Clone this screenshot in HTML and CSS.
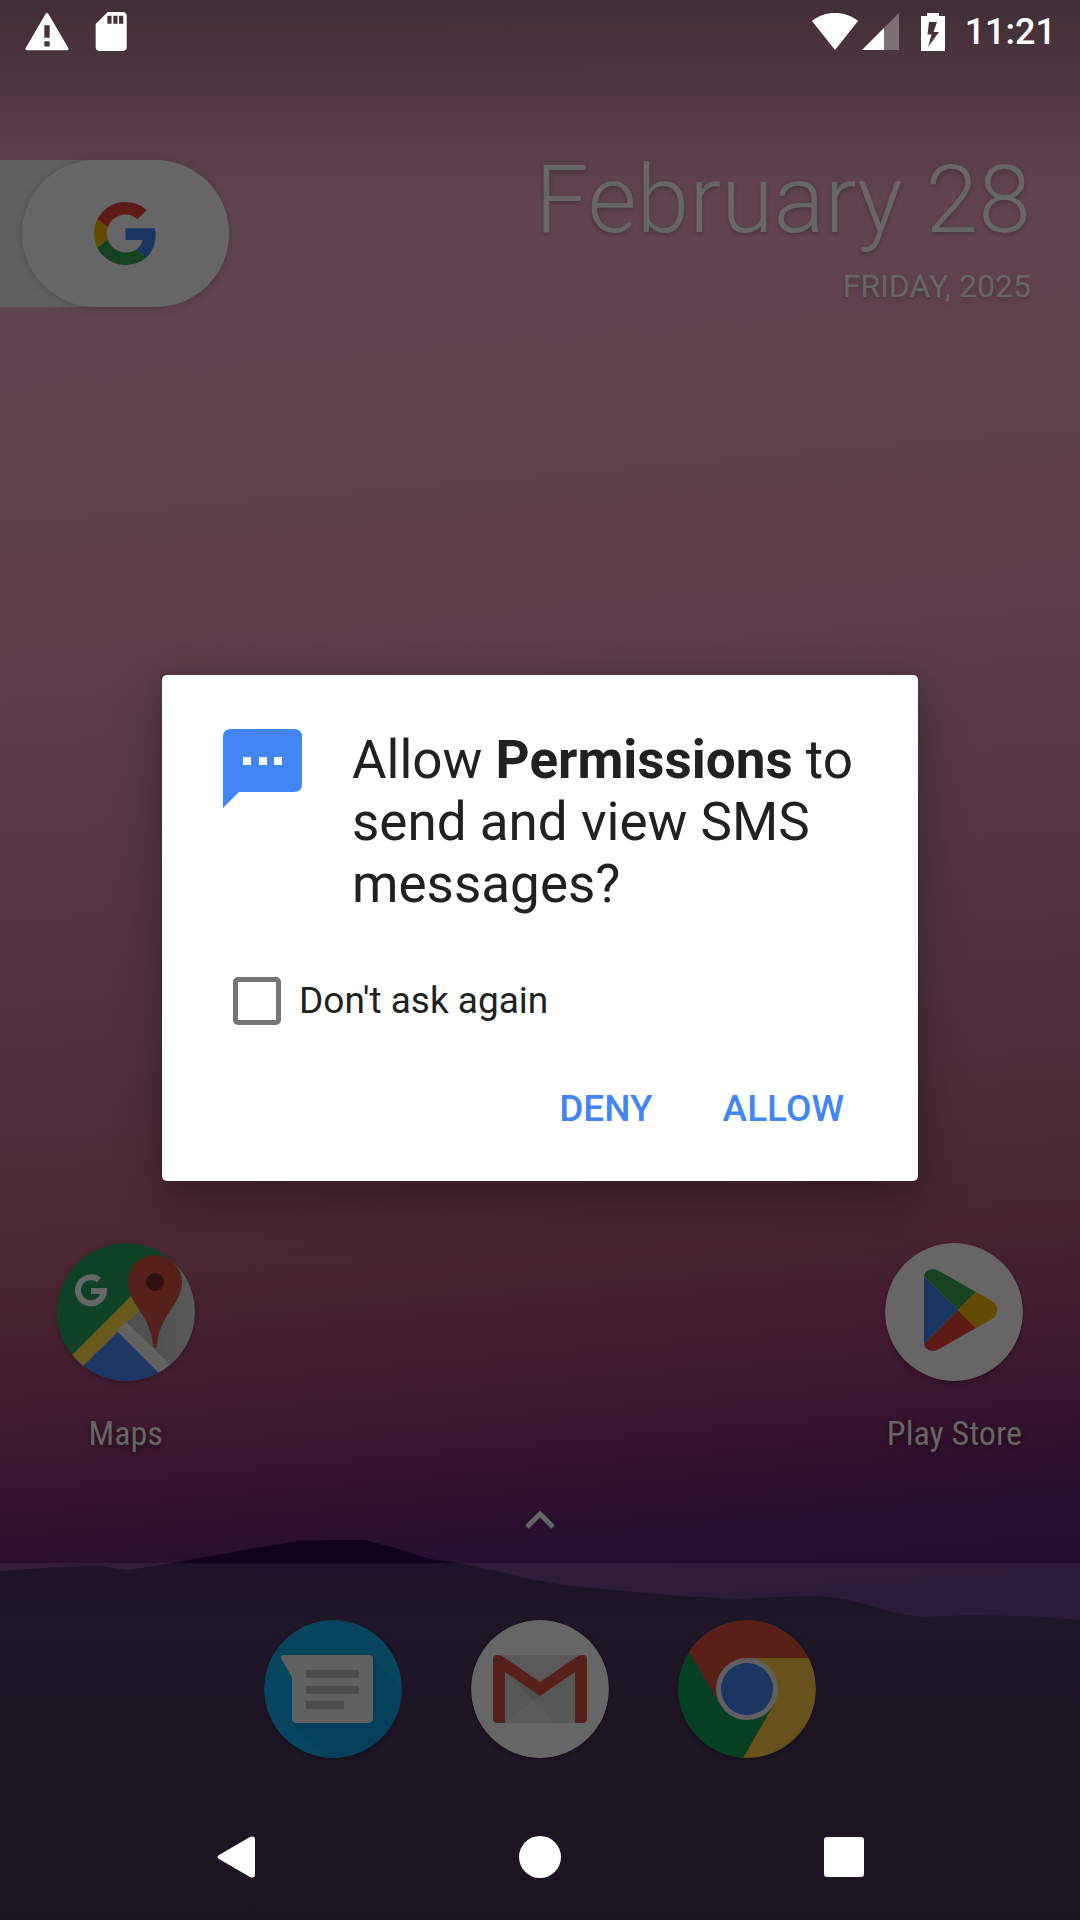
FILE: index.html
```html
<!DOCTYPE html>
<html lang="en">
<head>
<meta charset="utf-8">
<meta name="viewport" content="width=device-width, initial-scale=1">
<title>Permission request</title>
<link rel="stylesheet" href="styles.css">
</head>
<body>
<div class="screen">
  <svg class="hills" viewBox="0 0 1080 390" preserveAspectRatio="none" aria-hidden="true">
    <defs>
      <linearGradient id="hill" x1="0" y1="0" x2="0" y2="1">
        <stop offset="0" stop-color="#12001d"/>
        <stop offset="0.2" stop-color="#12081b"/>
        <stop offset="1" stop-color="#0e0614"/>
      </linearGradient>
    </defs>
    <path fill="url(#hill)" d="M0 41L60 37L100 36L128 40L165 34L200 28L250 19L300 11L335 10H365L395 18L430 29L465 34L505 43L535 50L570 56L625 61L680 66L740 69L780 67L820 66L850 70L900 84L925 87L970 85L1030 86L1080 90V390H0Z"/>
  </svg>

  <header class="status">
    <div class="status-group notices">
      <svg class="status-icon" viewBox="0 0 24 24" role="img" aria-label="Warning"><path fill="#fff" d="M1.6 21.5h20.8c.7 0 1-.6.7-1.200L12.700 2.500c-.3-.6-1.100-.6-1.400 0L.9 20.300c-.3.6 0 1.200.7 1.200zM10.600 8.500h2.800v6.500h-2.800zm0 8.300h2.800v2.700h-2.800z" fill-rule="evenodd"/></svg>
      <svg class="status-icon" viewBox="0 0 24 24" role="img" aria-label="SD card"><path fill="#fff" fill-rule="evenodd" d="M18.300 1.500h-8L4 7.800v12.200c0 1.100.8 1.900 1.800 1.900h12.500c1.100 0 1.900-.8 1.900-1.900v-16.500c0-1.100-.8-2-1.900-2zM10.100 3.500h2.200v4.200h-2.200zm3.100 0h2.200v4.200h-2.200zm3 0h2.200v4.200h-2.200z"/></svg>
    </div>
    <div class="status-group">
      <svg class="wifi" viewBox="0 0 46 37" role="img" aria-label="Wi-Fi"><path fill="#fff" d="M0 8C13-2.600 33-2.600 46 8L23 37z"/></svg>
      <svg class="signal" viewBox="0 0 37 37" role="img" aria-label="Signal"><path fill="#fff" fill-opacity=".3" d="M37 0v37H0z"/><path fill="#fff" d="M22 15v22H0z"/></svg>
      <svg class="battery" viewBox="0 0 24 38" role="img" aria-label="Battery charging"><path fill="#fff" fill-rule="evenodd" d="M6 0h12v3h6v35H0V3h6zM8 9L6.500 21.500h4L7 34l11-15h-5.500L16 9z"/></svg>
      <time class="clock">11:21</time>
    </div>
  </header>

  <main class="home">
    <section class="widgets">
      <div class="search-tray">
        <button class="search-pill" aria-label="Google search">
          <svg class="google" viewBox="0 0 48 48" aria-hidden="true">
            <path fill="#5e1b15" d="M24 9.500c3.540 0 6.710 1.220 9.210 3.600l6.850-6.850C35.900 2.380 30.470 0 24 0 14.620 0 6.510 5.380 2.560 13.220l7.980 6.190C12.430 13.720 17.740 9.500 24 9.500z"/>
            <path fill="#1a3562" d="M46.980 24.550c0-1.570-.15-3.090-.38-4.550H24v9.020h12.940c-.58 2.960-2.260 5.480-4.780 7.180l7.730 6c4.510-4.180 7.090-10.360 7.090-17.650z"/>
            <path fill="#644b02" d="M10.530 28.590c-.48-1.450-.76-2.990-.76-4.590s.27-3.140.76-4.590l-7.980-6.190C.92 16.460 0 20.120 0 24c0 3.880.92 7.540 2.560 10.780l7.970-6.190z"/>
            <path fill="#154321" d="M24 48c6.480 0 11.930-2.130 15.890-5.810l-7.730-6c-2.150 1.450-4.920 2.300-8.160 2.300-6.260 0-11.570-4.220-13.470-9.910l-7.980 6.190C6.510 42.620 14.620 48 24 48z"/>
          </svg>
        </button>
      </div>
      <div class="date">
        <div class="date-day">February 28</div>
        <div class="date-year">FRIDAY, 2025</div>
      </div>
    </section>

    <nav class="grid apps" aria-label="Apps">
      <a class="app" href="#maps">
        <svg class="app-icon" viewBox="0 0 138 138" aria-hidden="true">
          <defs>
            <clipPath id="disc"><circle cx="69" cy="69" r="69"/></clipPath>
            <linearGradient id="land" x1="0" y1="0" x2="1" y2="0"><stop offset=".5" stop-color="#505050"/><stop offset="1" stop-color="#5a5a5a"/></linearGradient>
          </defs>
          <g clip-path="url(#disc)">
            <path fill="url(#land)" d="M60 0H138V138H60z"/>
            <path fill="#0d4226" d="M0 0H138L116 20L74 54L16 111L0 127z"/>
            <path fill="#1d3764" d="M60 88L110 138H10z"/>
            <path fill="#665a1c" d="M76 51L5 122L16 133L84 66z"/>
            <path fill="#626262" d="M69 79L60 88L110 138L121 129z"/>
            <path fill="#58201a" d="M98 12a27 27 0 0 0-27 27c0 11 6 20 12 29 7 10 12 21 13 34q0 3 2 3t2-3c1-13 6-24 13-34 6-9 12-18 12-29a27 27 0 0 0-27-27z"/>
            <circle cx="98" cy="39" r="9" fill="#30110f"/>
          </g>
          <path fill="none" stroke="#666" stroke-width="6" d="M42 37A13 13 0 1 0 47 48H34"/>
        </svg>
        <span class="app-name">Maps</span>
      </a>
      <a class="app app-last" href="#play">
        <svg class="app-icon" viewBox="0 0 138 138" aria-hidden="true">
          <circle cx="69" cy="69" r="69" fill="#666"/>
          <path fill="#154321" d="M39 33C40 27 47 24 54 28L91 49L73 67z"/>
          <path fill="#5e1b15" d="M39 101C40 107 47 110 54 106L91 85L73 67z"/>
          <path fill="#644b02" d="M91 49L107 58C114 62 114 72 107 76L91 85L73 67z"/>
          <path fill="#1a3562" d="M39 33V101L73 67z"/>
        </svg>
        <span class="app-name">Play Store</span>
      </a>
    </nav>

    <button class="drawer" aria-label="All apps">
      <svg class="caret" viewBox="0 0 30 20" aria-hidden="true"><path fill="none" stroke="#666" stroke-width="5" d="M2 17L15 4L28 17"/></svg>
    </button>
  </main>

  <footer class="bottom">
    <nav class="grid dock" aria-label="Favourites">
      <a class="app dock-first" href="#messages" aria-label="Messages">
        <svg class="app-icon" viewBox="0 0 138 138" aria-hidden="true">
          <g clip-path="url(#disc)">
            <rect width="138" height="138" fill="#07455f"/>
            <path fill="#04405b" d="M109 38L138 67V138H62L28 103z"/>
          </g>
          <path fill="#606060" d="M20 35H105Q109 35 109 39V98Q109 103 104 103H33Q28 103 28 98V57L17 38Q16 35 20 35z"/>
          <path fill="#4c4c4c" d="M42 50H95V58H42zM42 66H95V74H42zM42 81H80V89H42z"/>
        </svg>
      </a>
      <a class="app" href="#gmail" aria-label="Gmail">
        <svg class="app-icon" viewBox="0 0 138 138" aria-hidden="true">
          <circle cx="69" cy="69" r="69" fill="#666"/>
          <path fill="#595959" d="M27 35H111L69 72z"/>
          <path fill="#575757" d="M34 50L69 76L104 50V103H34z"/>
          <path fill="#5b5b5b" d="M34 103L62 80L84 103z"/>
          <path fill="#505050" d="M34 52L62 80L69 76z"/>
          <path fill="#58201a" d="M34 103H26Q22 103 22 99V39Q22 35 26 35Q29 35 31 36L69 62L107 36Q109 35 112 35Q116 35 116 39V99Q116 103 112 103H104V52L69 76L34 52z"/>
        </svg>
      </a>
      <a class="app" href="#chrome" aria-label="Chrome">
        <svg class="app-icon" viewBox="0 0 138 138" aria-hidden="true">
          <g clip-path="url(#disc)">
            <rect width="138" height="138" fill="#064022"/>
            <path fill="#66521a" d="M69 38H138V138H65L96 84z"/>
            <path fill="#591f18" d="M0 0H138V38H69L42 84L11 32z"/>
          </g>
          <circle cx="69" cy="69" r="31" fill="#606060"/>
          <circle cx="69" cy="69" r="26" fill="#1c3563"/>
        </svg>
      </a>
    </nav>
    <nav class="keys" aria-label="System">
      <button class="key" aria-label="Back"><svg class="key-icon" viewBox="0 0 42 42" aria-hidden="true"><path fill="#fff" d="M4 19Q1 21 4 23L35 41Q40 43 40 38V4Q40-1 35 1z"/></svg></button>
      <button class="key" aria-label="Home"><svg class="key-icon" viewBox="0 0 42 42" aria-hidden="true"><circle cx="21" cy="21" r="21" fill="#fff"/></svg></button>
      <button class="key" aria-label="Recent apps"><svg class="key-icon" viewBox="0 0 42 42" aria-hidden="true"><rect x="1" y="1" width="40" height="40" rx="3" fill="#fff"/></svg></button>
    </nav>
  </footer>

  <div class="overlay">
    <form class="dialog" role="dialog" aria-labelledby="question">
      <div class="prompt">
        <svg class="sms" viewBox="0 0 79 79" aria-hidden="true"><path fill="#4285f4" d="M8 0H71Q79 0 79 8V55Q79 63 71 63H16L0 79V8Q0 0 8 0z"/><path fill="#fff" d="M20 28h8v8h-8zm16 0h8v8h-8zm15 0h8v8h-8z"/></svg>
        <h1 class="question" id="question">Allow <b>Permissions</b> to send and view SMS messages?</h1>
      </div>
      <div class="remember">
        <input class="tick" type="checkbox" id="dont-ask">
        <label for="dont-ask">Don't ask again</label>
      </div>
      <div class="actions">
        <button class="action" type="button">DENY</button>
        <button class="action" type="button">ALLOW</button>
      </div>
    </form>
  </div>
</div>
</body>
</html>
```
FILE: styles.css
```css
* { box-sizing: border-box; }

body {
  margin: 0;
  font-family: Roboto, sans-serif;
  color: #666;
}

button {
  margin: 0;
  padding: 0;
  border: 0;
  background: none;
  font: inherit;
  color: inherit;
}

svg { display: block; }

.screen {
  position: relative;
  display: flex;
  flex-direction: column;
  min-height: 100vh;
  background:
    linear-gradient(rgba(0, 0, 0, .32), rgba(0, 0, 0, 0) 200px),
    linear-gradient(175deg, #60434f 0%, #614450 16%, #5f414a 26%, #5a3a48 38%, #51303f 52%, #49252f 64%, #421b30 70%, #34122f 75%, #260f2e 79%, #1f0d2c 83%);
}

/* Wallpaper ridge, behind the dock */
.hills {
  position: absolute;
  left: 0;
  bottom: 0;
  width: 100%;
  height: 390px;
}

/* Status bar */
.status {
  position: relative;
  z-index: 3;
  display: flex;
  align-items: center;
  justify-content: space-between;
  height: 63px;
  padding: 0 24px;
  color: #fff;
}
.status-group { display: flex; align-items: center; }
.notices { gap: 18px; }
.status-icon { width: 46px; height: 46px; }
.wifi { width: 46px; height: 37px; }
.signal { width: 37px; height: 37px; margin-left: 4px; }
.battery { width: 24px; height: 38px; margin: 0 20px 0 22px; }
.clock { font-size: 36px; font-weight: 500; line-height: 44px; }

/* Home screen */
.home {
  position: relative;
  flex: 1;
  display: flex;
  flex-direction: column;
}
.widgets {
  display: flex;
  justify-content: space-between;
  align-items: flex-start;
  padding: 81px 49px 0 0;
}
.search-tray {
  margin-top: 16px;
  padding-left: 22px;
  background: #606060;
  border-radius: 0 74px 74px 0;
}
.search-pill {
  display: grid;
  place-items: center;
  width: 207px;
  height: 147px;
  border-radius: 74px;
  background: #666;
  box-shadow: 0 1px 10px rgba(0, 0, 0, .2);
}
.google { width: 63px; height: 63px; }
.date { text-align: right; text-shadow: 0 2px 5px rgba(0, 0, 0, .25); }
.date-day { font-size: 95px; font-weight: 300; line-height: 112px; }
.date-year { margin-top: 11px; font-size: 32px; line-height: 38px; }

.grid {
  display: grid;
  grid-template-columns: repeat(5, 1fr);
  padding: 0 22px;
}
.apps { margin-top: auto; }
.app {
  display: flex;
  flex-direction: column;
  align-items: center;
  gap: 32px;
  color: inherit;
  text-decoration: none;
}
.app-last { grid-column: 5; }
.app-icon {
  width: 138px;
  height: 138px;
  border-radius: 50%;
  box-shadow: 0 2px 5px rgba(0, 0, 0, .25);
}
.app-name {
  font-family: "Roboto Condensed", Roboto, sans-serif;
  font-size: 34px;
  line-height: 40px;
  white-space: nowrap;
  text-shadow: 0 2px 5px rgba(0, 0, 0, .5);
}
.drawer {
  align-self: center;
  padding: 57px 40px 33px;
}
.caret { width: 30px; height: 20px; }

.bottom {
  position: relative;
  background: rgba(255, 255, 255, .06);
}
.dock { height: 231px; padding-top: 57px; }
.dock-first { grid-column: 2; }
.keys {
  position: relative;
  z-index: 3;
  display: flex;
  justify-content: center;
  gap: 262px;
  height: 126px;
}
.key { display: grid; place-items: center; }
.key-icon { width: 42px; height: 42px; }

/* Permission dialog */
.overlay {
  position: absolute;
  z-index: 2;
  inset: 63px 0 128px;
  display: grid;
  place-items: center;
}
.dialog {
  width: 70%;
  padding: 54px 53px 50px 61px;
  border-radius: 5px;
  background: #fff;
  color: #212121;
  box-shadow: 0 20px 50px rgba(0, 0, 0, .3), 0 0 16px rgba(0, 0, 0, .1);
}
.prompt { display: flex; align-items: flex-start; gap: 50px; }
.sms { flex: none; width: 79px; height: 79px; }
.question {
  margin: 0;
  font-size: 53px;
  font-weight: 400;
  line-height: 62px;
}
.question b { font-weight: 700; }
.remember {
  display: flex;
  align-items: center;
  gap: 18px;
  margin: 62px 0 62px 10px;
  font-size: 37px;
  line-height: 44px;
}
.tick {
  appearance: none;
  width: 48px;
  height: 48px;
  margin: 0;
  border: 5px solid #757575;
  border-radius: 5px;
}
.actions { display: flex; justify-content: flex-end; gap: 28px; }
.action {
  padding: 0 21px;
  font-size: 37px;
  font-weight: 500;
  line-height: 44px;
  color: #4285f4;
}
```
